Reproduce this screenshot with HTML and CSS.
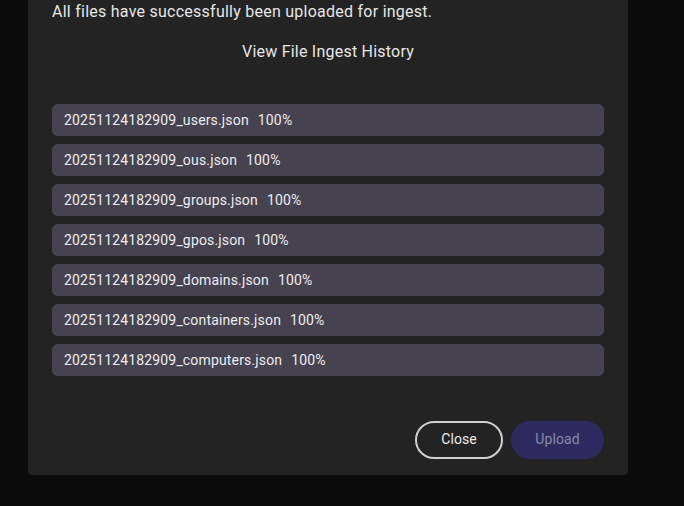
FILE: index.html
```html
<!DOCTYPE html>
<html>
<head>
<meta charset="utf-8">
<link rel="stylesheet" href="styles.css">
</head>
<body>
<div class="dialog">
  <p class="msg">All files have successfully been uploaded for ingest.</p>
  <div class="history"><span class="link">View File Ingest History</span></div>
  <ul class="files">
    <li class="file"><span class="name">20251124182909_users.json</span><span class="pct">100%</span></li>
    <li class="file"><span class="name">20251124182909_ous.json</span><span class="pct">100%</span></li>
    <li class="file"><span class="name">20251124182909_groups.json</span><span class="pct">100%</span></li>
    <li class="file"><span class="name">20251124182909_gpos.json</span><span class="pct">100%</span></li>
    <li class="file"><span class="name">20251124182909_domains.json</span><span class="pct">100%</span></li>
    <li class="file"><span class="name">20251124182909_containers.json</span><span class="pct">100%</span></li>
    <li class="file"><span class="name">20251124182909_computers.json</span><span class="pct">100%</span></li>
  </ul>
  <div class="actions">
    <button class="btn close">Close</button>
    <button class="btn upload">Upload</button>
  </div>
</div>
</body>
</html>
```
FILE: styles.css
```css
html, body {
  margin: 0;
  padding: 0;
  background: #0b0b0b;
  font-family: Roboto, "Liberation Sans", sans-serif;
  color: #e6e6e6;
}
.dialog {
  margin-left: 28px;
  width: 600px;
  box-sizing: border-box;
  padding: 0 24px 16px;
  background: #232323;
  border-radius: 0 0 4px 4px;
}
.msg {
  margin: 0;
  font-size: 16px;
  line-height: 24px;
  letter-spacing: 0.25px;
}
.history {
  margin-top: 16px;
  text-align: center;
  font-size: 16px;
  line-height: 24px;
  letter-spacing: 0.22px;
}
.files {
  list-style: none;
  margin: 40px 0 0;
  padding: 0;
  display: flex;
  flex-direction: column;
  gap: 8px;
}
.file {
  height: 32px;
  box-sizing: border-box;
  display: flex;
  align-items: center;
  padding: 0 12px 1px;
  background: #47424f;
  border-radius: 6px;
  font-size: 14px;
  letter-spacing: 0.16px;
  color: #ececf0;
}
.pct {
  margin-left: 9px;
}
.actions {
  margin-top: 45px;
  display: flex;
  justify-content: flex-end;
  gap: 8px;
}
.btn {
  height: 38px;
  border-radius: 19px;
  font-family: Roboto, "Liberation Sans", sans-serif;
  font-size: 14px;
  letter-spacing: 0.1px;
  padding: 0 0 2px;
  cursor: pointer;
}
.close {
  width: 88px;
  background: transparent;
  border: 2px solid #d0d0d0;
  color: #ececec;
}
.upload {
  width: 93px;
  background: #2e2a5f;
  border: none;
  color: #8a86b0;
}
```
